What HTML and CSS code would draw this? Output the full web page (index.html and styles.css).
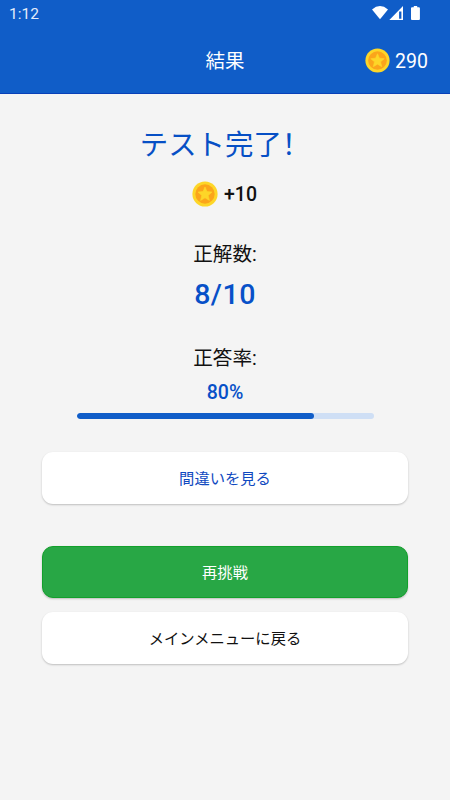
FILE: index.html
```html
<!DOCTYPE html>
<html lang="ja">
<head>
<meta charset="utf-8">
<meta name="viewport" content="width=device-width, initial-scale=1">
<title>結果</title>
<link rel="stylesheet" href="styles.css">
</head>
<body>
<svg class="defs" aria-hidden="true">
  <symbol id="coin" viewBox="0 0 26 26">
    <circle cx="13" cy="13" r="12.6" fill="#fdd628"/>
    <circle cx="13" cy="13" r="9.7" fill="#fba51b"/>
    <path d="M13 6l2 4.6 5 .5-3.8 3.3 1.2 5-4.4-2.6-4.4 2.6 1.2-5L6 11.100l5-.5z" fill="#fdd628" stroke="#fdd628" stroke-width=".6" stroke-linejoin="round"/>
  </symbol>
</svg>
<header class="header">
  <div class="status">
    <span class="time">1:12</span>
    <svg class="signals" viewBox="0 0 50 16" width="50" height="16" fill="#fff">
      <path d="M0 4.400Q8-2.400 16 4.400L8 14.300z"/>
      <path fill-rule="evenodd" d="M17.300 14.900L31 1v13.900zM27.100 6.500v7.200h2.300v-7.200z"/>
      <path d="M40 2.300h1.800V1h3.400v1.300h1.700q1 0 1 1v10.600q0 1-1 1H40q-1 0-1-1V3.300q0-1 1-1z"/>
    </svg>
  </div>
  <div class="bar">
    <h1 class="bar-title">結果</h1>
    <div class="balance"><svg class="coin-small"><use href="#coin"/></svg><span class="amount">290</span></div>
  </div>
</header>
<main class="content">
  <h2 class="done" lang="zh-Hans">テスト完了！</h2>
  <div class="reward"><svg class="coin-large"><use href="#coin"/></svg><span>+10</span></div>
  <p class="label">正解数:</p>
  <p class="score">8/10</p>
  <p class="label rate-label">正答率:</p>
  <p class="rate">80%</p>
  <div class="track"><div class="fill" style="width:80%"></div></div>
  <div class="actions">
    <button class="btn review">間違いを見る</button>
    <button class="btn retry">再挑戦</button>
    <button class="btn menu">メインメニューに戻る</button>
  </div>
</main>
</body>
</html>
```
FILE: styles.css
```css
* { box-sizing: border-box; }
body {
  margin: 0;
  height: 800px;
  background: #f4f4f4;
  color: #111;
  font-family: Roboto, "Noto Sans CJK JP", sans-serif;
}
h1, h2, p { margin: 0; font-weight: 400; }
.defs { position: absolute; width: 0; height: 0; }
.header {
  height: 94px;
  background: #105dc8;
  border-bottom: 1px solid #0840b8;
  color: #fff;
}
.status {
  display: flex;
  justify-content: space-between;
  height: 28px;
  padding: 5px 28px 0 9px;
}
.time { font-size: 15.5px; line-height: 19px; color: #e3ecfa; }
.signals { display: block; }
.bar {
  display: grid;
  grid-template-columns: 1fr auto 1fr;
  align-items: center;
  height: 65px;
  padding: 0 22px;
}
.bar-title { grid-column: 2; padding-top: 2px; font-size: 19.5px; line-height: 28px; }
.balance {
  justify-self: end;
  display: flex;
  align-items: center;
  gap: 5px;
  font-size: 19.5px;
}
.amount { padding-top: 2px; }
.coin-small { width: 25px; height: 25px; }
.coin-large { width: 26px; height: 26px; }
.content {
  display: flex;
  flex-direction: column;
  align-items: center;
  padding: 29px 42px 0;
}
.done {
  font-family: "Noto Sans CJK SC", sans-serif;
  font-size: 28.4px;
  line-height: 40px;
  color: #064fc5;
}
.reward {
  display: flex;
  align-items: center;
  gap: 6px;
  height: 26px;
  margin-top: 18px;
  padding-right: 1px;
  font-size: 19.5px;
  font-weight: 500;
}
.label { margin-top: 34px; font-size: 19.6px; line-height: 28px; }
.score {
  margin-top: 9px;
  font-size: 28.5px;
  font-weight: 500;
  line-height: 34px;
  letter-spacing: .5px;
  color: #0750c8;
}
.rate-label { margin-top: 33px; }
.rate {
  margin-top: 8px;
  font-size: 19.5px;
  font-weight: 500;
  line-height: 24px;
  color: #0750c8;
}
.track {
  width: 297px;
  height: 6px;
  margin-top: 8px;
  border-radius: 3px;
  background: #cfdff5;
  overflow: hidden;
}
.fill { height: 100%; border-radius: 3px; background: #105dc8; }
.actions {
  display: flex;
  flex-direction: column;
  width: 100%;
  margin-top: 33px;
}
.btn {
  height: 52px;
  border: 0;
  border-radius: 11px;
  padding: 0 0 2px;
  background: #fff;
  box-shadow: 0 1px 2px rgba(0, 0, 0, .22);
  font: 15.3px "Noto Sans CJK JP", sans-serif;
  color: #111;
}
.review { color: #1049c0; }
.retry {
  margin: 42px 0 14px;
  border: 1px solid #12a02b;
  background: #28a745;
  color: #fff;
}
```
